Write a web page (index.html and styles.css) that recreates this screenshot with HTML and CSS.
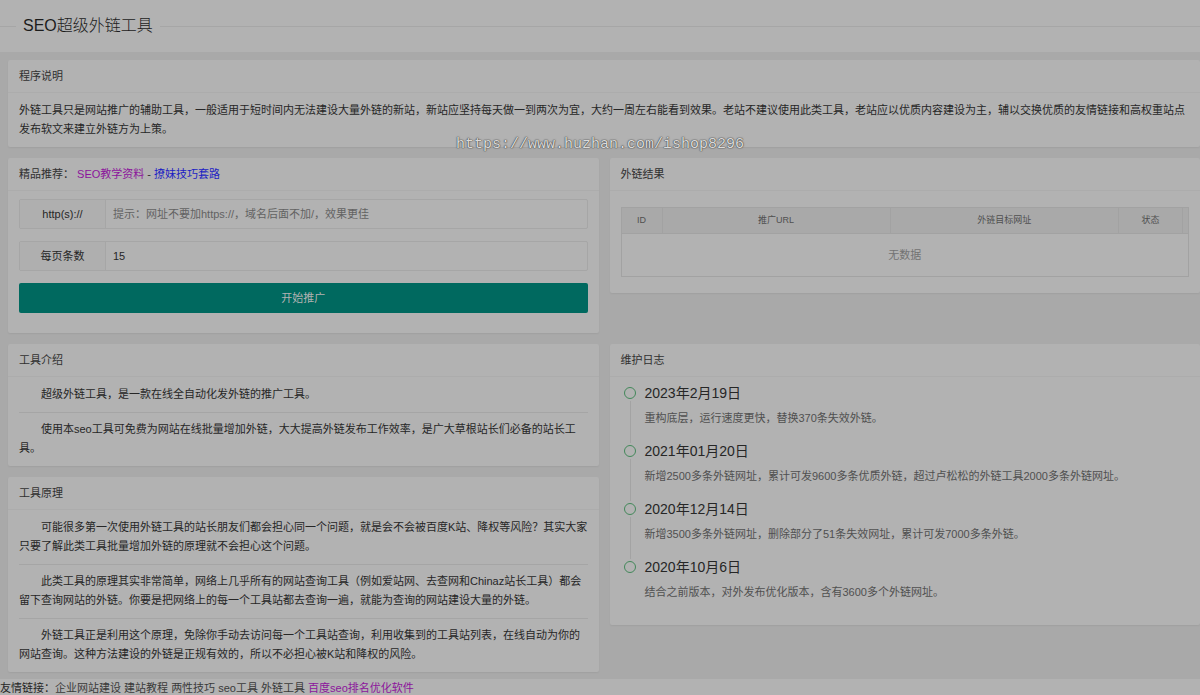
FILE: index.html
```html
<!DOCTYPE html>
<html lang="zh-CN">
<head>
  <meta charset="UTF-8">
  <meta name="viewport" content="width=device-width, initial-scale=1.0">
  <title>SEO超级外链工具</title>
  <link rel="stylesheet" href="styles.css">
</head>
<body>
  <header class="header">
    <fieldset class="title-line">
      <legend>SEO超级外链工具</legend>
    </fieldset>
  </header>

  <main class="main">
    <section class="card wide">
      <h2 class="card-header">程序说明</h2>
      <div class="card-body">
        <p>外链工具只是网站推广的辅助工具，一般适用于短时间内无法建设大量外链的新站，新站应坚持每天做一到两次为宜，大约一周左右能看到效果。老站不建议使用此类工具，老站应以优质内容建设为主，辅以交换优质的友情链接和高权重站点发布软文来建立外链方为上策。</p>
      </div>
    </section>

    <section class="card">
      <h2 class="card-header">精品推荐： <a href="#" class="visited">SEO教学资料</a> - <a href="#" class="link">撩妹技巧套路</a></h2>
      <form class="card-body">
        <div class="form-item">
          <label for="url">http(s)://</label>
          <input type="text" id="url" placeholder="提示：网址不要加https://，域名后面不加/，效果更佳">
        </div>
        <div class="form-item">
          <label for="num">每页条数</label>
          <input type="text" id="num" value="15">
        </div>
        <button type="button" class="btn">开始推广</button>
      </form>
    </section>

    <section class="card">
      <h2 class="card-header">外链结果</h2>
      <div class="card-body">
        <table class="result">
          <thead>
            <tr>
              <th class="col-id">ID</th>
              <th>推广URL</th>
              <th>外链目标网址</th>
              <th class="col-status">状态</th>
              <th class="col-gutter"></th>
            </tr>
          </thead>
          <tbody>
            <tr><td colspan="5">无数据</td></tr>
          </tbody>
        </table>
      </div>
    </section>

    <div class="column">
      <section class="card">
        <h2 class="card-header">工具介绍</h2>
        <div class="card-body indent">
          <p>超级外链工具，是一款在线全自动化发外链的推广工具。</p>
          <hr>
          <p>使用本seo工具可免费为网站在线批量增加外链，大大提高外链发布工作效率，是广大草根站长们必备的站长工具。</p>
        </div>
      </section>

      <section class="card">
        <h2 class="card-header">工具原理</h2>
        <div class="card-body indent">
          <p>可能很多第一次使用外链工具的站长朋友们都会担心同一个问题，就是会不会被百度K站、降权等风险？其实大家只要了解此类工具批量增加外链的原理就不会担心这个问题。</p>
          <hr>
          <p>此类工具的原理其实非常简单，网络上几乎所有的网站查询工具（例如爱站网、去查网和Chinaz站长工具）都会留下查询网站的外链。你要是把网络上的每一个工具站都去查询一遍，就能为查询的网站建设大量的外链。</p>
          <hr>
          <p>外链工具正是利用这个原理，免除你手动去访问每一个工具站查询，利用收集到的工具站列表，在线自动为你的网站查询。这种方法建设的外链是正规有效的，所以不必担心被K站和降权的风险。</p>
        </div>
      </section>
    </div>

    <section class="card">
      <h2 class="card-header">维护日志</h2>
      <ul class="card-body timeline">
        <li>
          <h3>2023年2月19日</h3>
          <p>重构底层，运行速度更快，替换370条失效外链。</p>
        </li>
        <li>
          <h3>2021年01月20日</h3>
          <p>新增2500多条外链网址，累计可发9600多条优质外链，超过卢松松的外链工具2000多条外链网址。</p>
        </li>
        <li>
          <h3>2020年12月14日</h3>
          <p>新增3500多条外链网址，删除部分了51条失效网址，累计可发7000多条外链。</p>
        </li>
        <li>
          <h3>2020年10月6日</h3>
          <p>结合之前版本，对外发布优化版本，含有3600多个外链网址。</p>
        </li>
      </ul>
    </section>
  </main>

  <footer class="footer">
    友情链接：<a href="#">企业网站建设</a>
    <a href="#">建站教程</a>
    <a href="#">两性技巧</a>
    <a href="#">seo工具</a>
    <a href="#">外链工具</a>
    <a href="#" class="visited">百度seo排名优化软件</a>
  </footer>

  <div class="watermark">https://www.huzhan.com/ishop8296</div>
</body>
</html>
```
FILE: styles.css
```css
*,
*::before,
*::after {
  box-sizing: border-box;
}

body {
  margin: 0;
  background: #b2b2b2;
  color: #262626;
  font: 11px/19px "Liberation Sans", "Noto Sans CJK SC", sans-serif;
}

h2, h3, p, ul {
  margin: 0;
  padding: 0;
  font-weight: inherit;
}

a {
  color: #3a3a3a;
  text-decoration: none;
}

a.visited {
  color: #8c149c;
}

a.link {
  color: #1c1cc4;
}

.header {
  padding: 16px 0;
}

.title-line {
  margin: 0;
  padding: 0;
  border: none;
  border-top: 1px solid #a6a6a6;
}

.title-line legend {
  margin-left: 16px;
  padding: 0 7px;
  color: #1c1c1c;
  font-size: 16px;
  font-weight: 300;
  line-height: 20px;
}

.main {
  display: grid;
  grid-template-columns: minmax(0, 1fr) minmax(0, 1fr);
  gap: 11px;
  align-items: start;
  padding: 8px 0 7px 8px;
  background: #a9a9a9;
}

.wide {
  grid-column: 1 / -1;
}

.column {
  display: flex;
  flex-direction: column;
  gap: 11px;
}

.card {
  background: #b2b2b2;
  border-radius: 2px;
  box-shadow: 0 1px 2px rgba(0, 0, 0, 0.06);
}

.card-header {
  height: 33px;
  padding: 0 11px;
  border-bottom: 1px solid #acacac;
  color: #303030;
  font-size: 11px;
  line-height: 32px;
}

.card-body {
  padding: 8px 11px;
}

.indent p {
  text-indent: 2em;
}

hr {
  margin: 8px 0 7px;
  border: none;
  border-top: 1px solid #a5a5a5;
}

/* form */
.form-item {
  display: flex;
  height: 30px;
  margin-bottom: 12px;
  border: 1px solid #a6a6a6;
  border-radius: 2px;
}

.form-item label {
  width: 86px;
  border-right: 1px solid #a6a6a6;
  background: #afafaf;
  line-height: 28px;
  text-align: center;
}

.form-item input {
  flex: 1;
  min-width: 0;
  padding: 0 7px;
  border: none;
  background: none;
  color: #262626;
  font: inherit;
}

.form-item input::placeholder {
  color: #626262;
}

.btn {
  display: block;
  width: 100%;
  height: 30px;
  margin-bottom: 12px;
  border: none;
  border-radius: 2px;
  background: #00695f;
  color: #b2b2b2;
  font: inherit;
}

/* result table */
.result {
  width: 100%;
  margin: 8px 0;
  border: 1px solid #a2a2a2;
  border-collapse: collapse;
  table-layout: fixed;
  text-align: center;
}

.result th {
  height: 26px;
  padding: 0;
  border: 1px solid #a2a2a2;
  background: #a9a9a9;
  color: #505050;
  font-size: 9px;
  font-weight: inherit;
}

.result td {
  height: 43px;
  padding: 0;
  color: #727272;
}

.col-id {
  width: 41px;
}

.col-status {
  width: 64px;
}

.col-gutter {
  width: 6px;
}

/* timeline */
.timeline {
  list-style: none;
}

.timeline li {
  position: relative;
  padding: 0 0 15px 24px;
}

.timeline li::before {
  content: "";
  position: absolute;
  top: 2px;
  left: 3px;
  width: 12px;
  height: 12px;
  border: 1px solid #43885a;
  border-radius: 50%;
}

.timeline li:not(:last-child)::after {
  content: "";
  position: absolute;
  top: 16px;
  bottom: 0;
  left: 9px;
  width: 1px;
  background: #a3a3a3;
}

.timeline h3 {
  margin-bottom: 8px;
  font-size: 14px;
  line-height: 16px;
}

.timeline p {
  color: #505050;
}

.watermark {
  position: absolute;
  top: 135px;
  left: 0;
  width: 100%;
  color: #dadada;
  font: 15px/19px "Liberation Mono", monospace;
  text-align: center;
  text-shadow: 0 0 1px #444, 0 0 1px #444, 0 0 2px #777;
  pointer-events: none;
}
```
